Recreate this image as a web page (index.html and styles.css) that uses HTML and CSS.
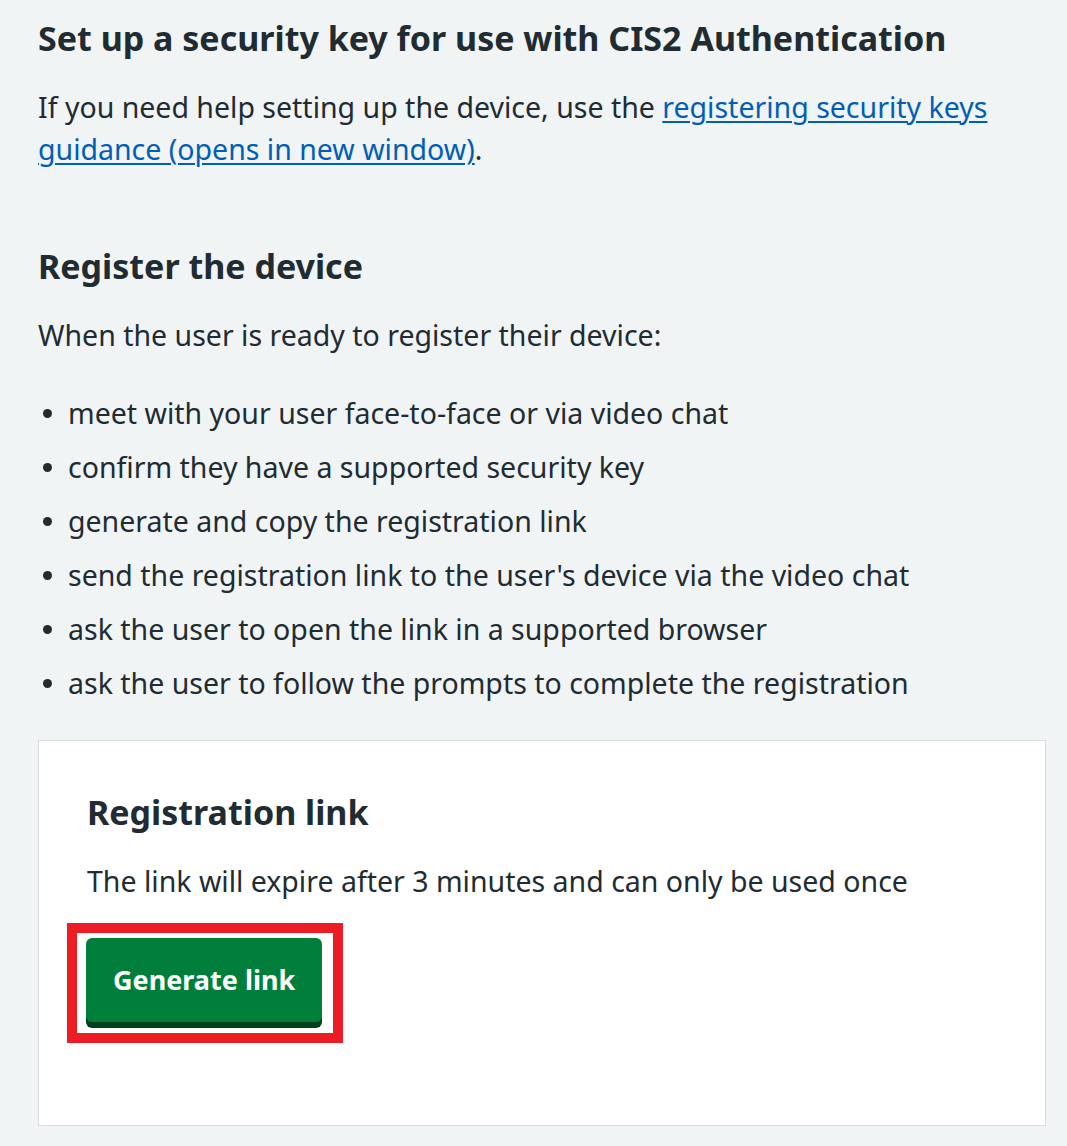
FILE: index.html
```html
<!DOCTYPE html>
<html lang="en">
<head>
<meta charset="utf-8">
<title>Set up a security key</title>
<link rel="stylesheet" href="styles.css">
</head>
<body>
<main class="page">
  <h3 class="heading">Set up a security key for use with CIS2 Authentication</h3>
  <p class="body intro">If you need help setting up the device, use the <a href="#" class="link">registering security keys guidance (opens in new window)</a>.</p>

  <h3 class="heading">Register the device</h3>
  <p class="body">When the user is ready to register their device:</p>
  <ul class="list">
    <li>meet with your user face-to-face or via video chat</li>
    <li>confirm they have a supported security key</li>
    <li>generate and copy the registration link</li>
    <li>send the registration link to the user's device via the video chat</li>
    <li>ask the user to open the link in a supported browser</li>
    <li>ask the user to follow the prompts to complete the registration</li>
  </ul>

  <section class="card">
    <h3 class="heading">Registration link</h3>
    <p class="body">The link will expire after 3 minutes and can only be used once</p>
    <button class="button" type="button">Generate link</button>
  </section>
</main>
</body>
</html>
```
FILE: styles.css
```css
* { box-sizing: border-box; }
html, body {
  margin: 0;
  padding: 0;
  background: #f0f4f5;
}
body {
  font-family: "Noto Sans", "Open Sans", sans-serif;
  color: #212b32;
}
.page {
  padding: 14px 21px 20px 38px;
}
.heading {
  font-size: 34px;
  line-height: 48px;
  font-weight: 700;
  margin: 0 0 24px;
}
.body {
  font-size: 28.5px;
  line-height: 42px;
  margin: 0 0 36px;
}
.intro {
  margin-bottom: 72px;
}
.link {
  color: #005eb8;
  text-decoration: underline;
  text-decoration-thickness: 2px;
  text-underline-offset: 3px;
}
.list {
  list-style: none;
  margin: 0 0 36px;
  padding: 0 0 0 30px;
  font-size: 28.5px;
  line-height: 42px;
}
.list li {
  position: relative;
  margin-bottom: 12px;
}
.list li:last-child { margin-bottom: 0; }
.list li::before {
  content: "";
  position: absolute;
  left: -25px;
  top: 17px;
  width: 9px;
  height: 9px;
  border-radius: 50%;
  background: #212b32;
}
.card {
  background: #fff;
  border: 1px solid #d8dde0;
  padding: 47px 48px 48px 48px;
}
.card .body { margin-bottom: 36px; }
.button {
  position: relative;
  display: inline-block;
  font-family: inherit;
  font-size: 27px;
  line-height: 42px;
  font-weight: 700;
  color: #fff;
  background: #007f3b;
  border: 3px solid transparent;
  border-radius: 6px;
  padding: 18px 24px;
  margin: 0 0 55px -1px;
  box-shadow: 0 6px 0 #00401e;
  cursor: pointer;
}
.button::after {
  content: "";
  position: absolute;
  top: -18px;
  left: -22px;
  right: -24px;
  bottom: -24px;
  border: 10px solid #ed1c24;
  pointer-events: none;
}
```
